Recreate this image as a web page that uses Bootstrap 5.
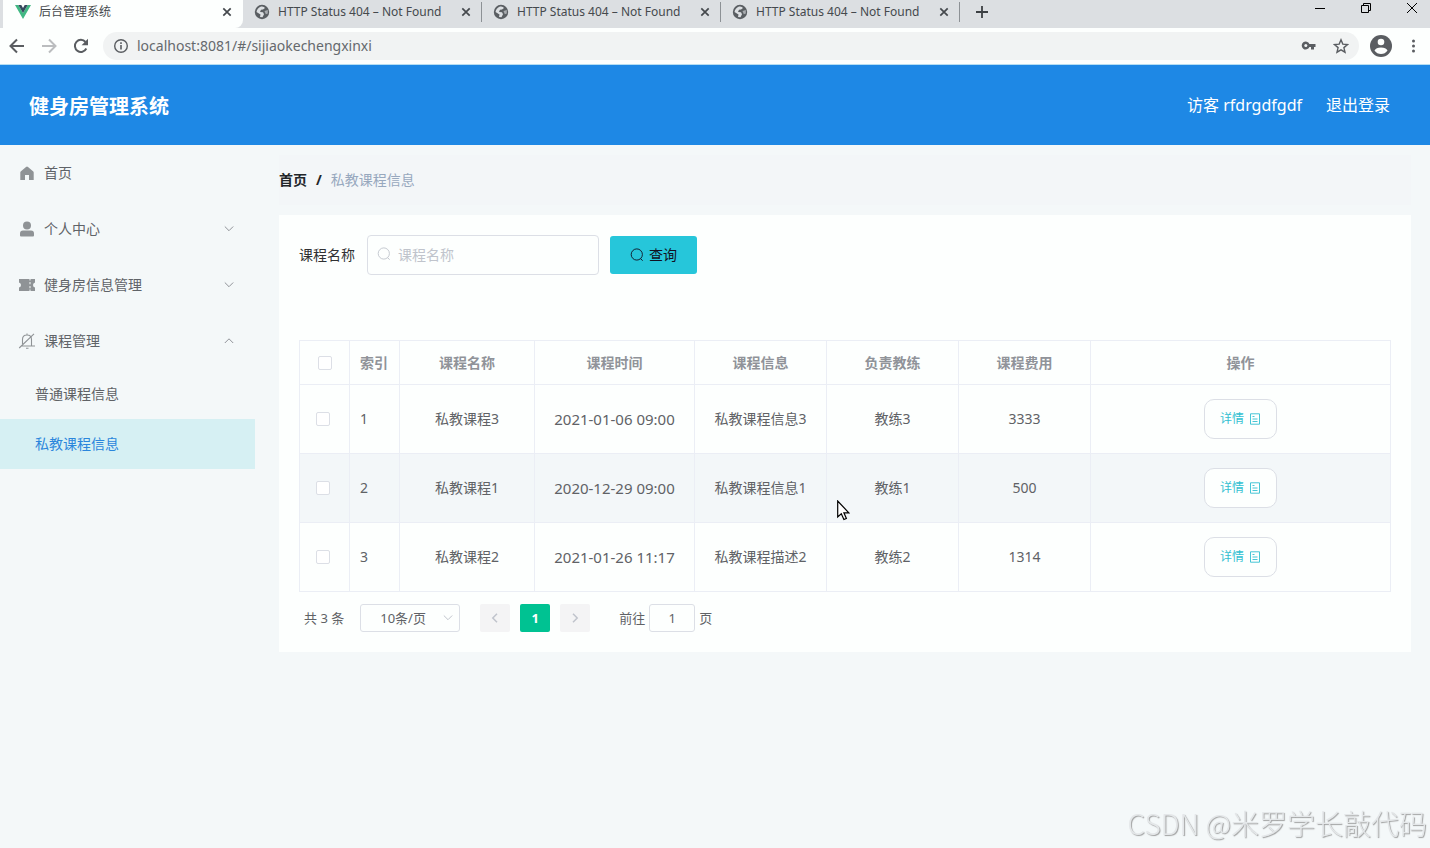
<!DOCTYPE html>
<html lang="zh-CN">
<head>
<meta charset="utf-8">
<meta name="viewport" content="width=device-width, initial-scale=1">
<title>后台管理系统</title>
<link href="https://cdn.jsdelivr.net/npm/bootstrap@5.3.0/dist/css/bootstrap.min.css" rel="stylesheet">
<style>
:root { --page: #f4f8f9; --panel: #fdfffe; --line: #ebeef5; --ink: #606266; --cyan: #26c6da; }
body { font-family: "Noto Sans", "Noto Sans CJK SC", sans-serif; font-size: 14px; line-height: 20px; color: var(--ink); background: var(--page); overflow-x: hidden; }
a { color: inherit; text-decoration: none; }
svg { display: block; flex: none; }
.plain { border: 0; background: none; padding: 0; color: inherit; }

/* browser frame */
.tabstrip { background: #dcdfe2; height: 28px; color: #45494d; font-size: 12px; padding-left: 3px; }
.tab-item { width: 239px; height: 28px; padding: 0 9px 5px 11px; gap: 8px; }
.tab-item.current { background: var(--panel); width: 240px; padding-left: 12px; border-radius: 0 0 8px 0; }
.tab-item + .tab-item .tab-end { border-right: 1px solid #8d9195; }
.tab-end { height: 20px; width: 21px; padding-right: 10px; margin-right: -9px; }
.win-btns { gap: 36px; padding: 0 13px 12px 0; color: #000; }
.toolbar { background: var(--panel); height: 37px; padding: 0 6px 0 9px; border-bottom: 1px solid #b5def3; color: #5a5d61; }
.address { background: #f1f3f3; height: 28px; border-radius: 14px; padding: 0 10px; margin: 0 11px 0 14px; }
.address input { font-size: 14px; color: #65696d; outline: 0; }

/* application */
.topbar { background: #1e88e5; color: #fff; height: 80px; padding: 0 40px 0 29px; }
.brand { font-size: 20px; line-height: 28px; font-weight: 700; margin: 0; padding-top: 4px; }
.user-links { font-size: 16px; gap: 24px; }
.side { width: 255px; }
.side-item { height: 56px; padding: 0 21px 0 20px; gap: 10px; color: #5f6368; width: 100%; }
.side-item > svg:first-child { color: #8f9396; }
.side-item > svg:last-child { color: #909399; }
.side-sub { height: 50px; padding-left: 35px; }
.side-sub.current { background: #d6f0f3; color: #2b86dc; }
.content-area { padding: 10px 19px 24px 24px; }
.crumbs { height: 50px; background: #f3f6f8; gap: 9px; }
.crumbs span { color: #97a8be; }
.panel { background: var(--panel); margin-top: 10px; padding: 20px; }
.search-row { height: 40px; margin-bottom: 65px; color: #303133; }
.search-box { width: 232px; margin: 0 11px 0 12px; }
.search-box svg { position: absolute; left: 10px; top: 12px; color: #c0c4cc; }
.search-box input { height: 40px; font-size: 14px; line-height: 20px; padding: 0 12px 2px 30px; border: 1px solid #dcdfe6; border-radius: 4px; background: var(--panel); }
.search-box input::placeholder { color: #c0c4cc; }
.btn-find { --bs-btn-bg: var(--cyan); --bs-btn-color: #112; --bs-btn-hover-bg: #4dd0e1; height: 38px; width: 87px; gap: 5px; font-size: 14px; line-height: 20px; padding: 0 0 1px; border: 0; border-radius: 3px; }
.grid { table-layout: fixed; --bs-table-bg: var(--panel); --bs-table-color: var(--ink); --bs-table-border-color: var(--line); border-color: var(--line); margin: 0; color: var(--ink); text-align: center; }
.grid th { height: 44px; padding: 0 10px; color: #909399; font-weight: 700; vertical-align: middle; }
.grid td { height: 69px; padding: 0 10px; vertical-align: middle; }
.grid .hovered { --bs-table-bg: #f3f7f9; }
.grid .idx { text-align: left; }
.grid .num { font-size: 15px; }
.grid .form-check-input { width: 14px; height: 14px; margin: 0; border: 1px solid #dcdfe6; border-radius: 2px; display: block; background-color: #fff; }
.grid td:first-child { padding: 0 16px; }
.grid th:first-child { padding: 0 18px; }
.btn-detail { --bs-btn-color: #32bfd1; --bs-btn-bg: #fdfffe; --bs-btn-border-color: #dcdfe6; width: 73px; height: 40px; font-size: 12px; border-radius: 10px; padding: 0; gap: 5px; }
.pointer { position: absolute; left: 10px; top: 46px; }
.pager { font-size: 13px; padding: 12px 5px 0; }
.pager .page-btn { width: 30px; height: 28px; border: 0; border-radius: 2px; background: #f4f4f5; color: #c0c4cc; font-size: 13px; font-weight: 700; padding: 0; }
.pager .page-btn.current { background: #00c292; color: #fff; margin: 0 10px; }
.pager label { margin-left: 29px; }
.size-box { width: 100px; margin: 0 20px 0 16px; }
.size-box select { height: 28px; font-size: 13px; line-height: 20px; padding: 0 25px 0 19px; background: var(--panel); color: var(--ink); border: 1px solid #dcdfe6; border-radius: 3px; }
.size-box svg { position: absolute; right: 7px; top: 9px; color: #c0c4cc; }
.jump { width: 46px; height: 28px; font-size: 13px; padding: 0; margin: 0 4px; border: 1px solid #dcdfe6; border-radius: 3px; text-align: center; color: var(--ink); background: var(--panel); }
.watermark { position: fixed; right: 3px; bottom: 5px; font-family: "Noto Sans CJK SC", sans-serif; font-weight: 300; font-size: 28px; line-height: 40px; color: #e4e7e9; text-shadow: 1px 1px 1px #888c; pointer-events: none; white-space: nowrap; }
</style>
</head>
<body class="d-flex flex-column min-vh-100">
<svg class="d-none">
  <symbol id="globe" viewBox="0 0 16 16"><circle cx="8" cy="8" r="7.2" fill="#5a5e62"/><path d="M7 2.500Q10 2 11 4l-2 1.500-2 .3L6 8l3 .3 1 2-1.500 3L6 13l.5-2.500L2.500 8Q3 4 7 2.500z" fill="#dcdfe2"/><path d="M10.500 7l3.300-1v3.500l-2 .7z" fill="#dcdfe2" opacity=".6"/></symbol>
  <symbol id="cross" viewBox="0 0 10 10"><path d="M1.300 1.300l7.400 7.400M8.700 1.300L1.300 8.700" stroke="currentColor" stroke-width="1.700"/></symbol>
  <symbol id="down" viewBox="0 0 10 10"><path d="M.8 2.500L5 6.700 9.200 2.500" fill="none" stroke="currentColor"/></symbol>
  <symbol id="lens" viewBox="0 0 14 14"><circle cx="6.800" cy="6.500" r="5.600" fill="none" stroke="currentColor" stroke-width=".9"/><path d="M10.600 10.700l2 2" stroke="currentColor"/></symbol>
  <symbol id="doc" viewBox="0 0 12 12"><path d="M1.500.8h9v10.400h-9zM3.500 3.500h2M3.500 6h5M3.500 8.500h5" fill="none" stroke="currentColor" stroke-width=".9"/></symbol>
</svg>

<header>
  <div class="tabstrip d-flex">
    <div class="tab-item current d-flex align-items-center">
      <svg width="16" height="16" viewBox="0 0 16 16"><path d="M0 1h3.300L8 9l4.700-8H16L8 15z" fill="#41b883"/><path d="M3.300 1h3L8 4l1.700-3h3L8 9z" fill="#35495e"/></svg>
      <span class="flex-grow-1">后台管理系统</span>
      <button class="plain tab-end d-flex align-items-center" aria-label="关闭"><svg width="10" height="10"><use href="#cross"/></svg></button>
    </div>
    <div class="tab-item d-flex align-items-center"><svg width="16" height="16"><use href="#globe"/></svg><span class="flex-grow-1 text-nowrap">HTTP Status 404 – Not Found</span><button class="plain tab-end d-flex align-items-center" aria-label="关闭"><svg width="10" height="10"><use href="#cross"/></svg></button></div>
    <div class="tab-item d-flex align-items-center"><svg width="16" height="16"><use href="#globe"/></svg><span class="flex-grow-1 text-nowrap">HTTP Status 404 – Not Found</span><button class="plain tab-end d-flex align-items-center" aria-label="关闭"><svg width="10" height="10"><use href="#cross"/></svg></button></div>
    <div class="tab-item d-flex align-items-center"><svg width="16" height="16"><use href="#globe"/></svg><span class="flex-grow-1 text-nowrap">HTTP Status 404 – Not Found</span><button class="plain tab-end d-flex align-items-center" aria-label="关闭"><svg width="10" height="10"><use href="#cross"/></svg></button></div>
    <button class="plain ms-3 pb-1" aria-label="新标签页"><svg width="12" height="12" viewBox="0 0 12 12"><path d="M6 0v12M0 6h12" stroke="#3c4043" stroke-width="1.800"/></svg></button>
    <div class="win-btns d-flex align-items-center ms-auto">
      <button class="plain" aria-label="最小化"><svg width="10" height="10"><path d="M0 5.500h10" stroke="currentColor"/></svg></button>
      <button class="plain" aria-label="还原"><svg width="10" height="10"><path d="M.5 2.500h7v7h-7zM2.500 2.500v-2h7v7h-2" fill="none" stroke="currentColor"/></svg></button>
      <button class="plain" aria-label="关闭窗口"><svg width="10" height="10"><path d="M0 0l10 10M10 0L0 10" stroke="currentColor"/></svg></button>
    </div>
  </div>
  <div class="toolbar d-flex align-items-center">
    <button class="plain" aria-label="后退"><svg width="16" height="16" viewBox="0 0 16 16"><path d="M15 8H2M8 1.500L1.500 8 8 14.500" fill="none" stroke="currentColor" stroke-width="2"/></svg></button>
    <button class="plain ms-3" aria-label="前进"><svg width="16" height="16" viewBox="0 0 16 16"><path d="M1 8h13M8 1.500L14.500 8 8 14.500" fill="none" stroke="#bbbdbf" stroke-width="2"/></svg></button>
    <button class="plain ms-3" aria-label="刷新"><svg width="16" height="16" viewBox="0 0 16 16"><path d="M13.300 10.500A6 6 0 1 1 12.500 4" fill="none" stroke="currentColor" stroke-width="2"/><path d="M15 .8v6.400H8.600z" fill="currentColor"/></svg></button>
    <div class="address d-flex align-items-center flex-grow-1">
      <svg width="16" height="16" viewBox="0 0 16 16"><circle cx="8" cy="8" r="6.300" fill="none" stroke="currentColor" stroke-width="1.400"/><path d="M8 7v4.500M8 4.300v1.600" stroke="currentColor" stroke-width="1.600"/></svg>
      <input class="plain flex-grow-1 ms-2" type="text" value="localhost:8081/#/sijiaokechengxinxi" aria-label="地址">
      <svg width="16" height="16" viewBox="0 0 16 16"><path d="M8.400 6A4 4 0 1 0 8.400 9H10v2.400h3V9h1.500V6z" fill="currentColor"/><circle cx="4.800" cy="7.500" r="1.500" fill="#f1f3f3"/></svg>
      <svg class="ms-3" width="16" height="16" viewBox="0 0 16 16"><path d="M8 1.800l1.800 4.300 4.700.4-3.600 3.100 1.100 4.600L8 11.800l-4 2.400 1.100-4.600L1.500 6.500l4.700-.4z" fill="none" stroke="currentColor" stroke-width="1.400"/></svg>
    </div>
    <button class="plain" aria-label="用户"><svg width="22" height="22" viewBox="0 0 22 22"><circle cx="11" cy="11" r="11" fill="currentColor"/><circle cx="11" cy="7" r="3.300" fill="#fdfffe"/><path d="M4.500 15.500Q6 12.500 11 12.500t6.500 3Q15 19 11 19t-6.500-3.500z" fill="#fdfffe"/></svg></button>
    <button class="plain ms-3" aria-label="菜单"><svg width="16" height="16" viewBox="0 0 16 16" fill="currentColor"><circle cx="5.500" cy="3" r="1.500"/><circle cx="5.500" cy="8" r="1.500"/><circle cx="5.500" cy="13" r="1.500"/></svg></button>
  </div>
  <div class="topbar d-flex align-items-center justify-content-between">
    <h1 class="brand">健身房管理系统</h1>
    <div class="user-links d-flex"><span>访客 rfdrgdfgdf</span><a href="#">退出登录</a></div>
  </div>
</header>

<div class="d-flex flex-grow-1">
  <nav class="side flex-shrink-0">
    <a href="#" class="side-item d-flex align-items-center"><svg width="14" height="14" viewBox="0 0 14 14"><path d="M7 .5q.5 0 1 .5l5.300 4.500q.4.400.4 1V14H9V9H5v5H.3V6.500q0-.6.4-1L6 1q.5-.5 1-.5z" fill="currentColor"/></svg><span>首页</span></a>
    <button class="plain side-item d-flex align-items-center"><svg width="14" height="16" viewBox="0 0 14 16" fill="currentColor"><circle cx="7" cy="4.500" r="4"/><path d="M0 14.500v-2Q0 9.500 3 9.500h8q3 0 3 3v2q0 1-1 1H1q-1 0-1-1z"/></svg>个人中心<svg class="ms-auto" width="10" height="10"><use href="#down"/></svg></button>
    <button class="plain side-item d-flex align-items-center"><svg width="14" height="12" viewBox="0 0 14 12" overflow="visible"><path d="M-1 0H9.500v1.500h1V0H15v3.500q-2 .5-2 2.500t2 2.500V12h-4.500v-1.500h-1V12H-1V8.500q2-.5 2-2.500t-2-2.500zM9.500 3v2.300h1V3zm0 4v2.300h1V7z" fill="currentColor" fill-rule="evenodd"/></svg>健身房信息管理<svg class="ms-auto" width="10" height="10"><use href="#down"/></svg></button>
    <button class="plain side-item d-flex align-items-center"><svg width="14" height="16" viewBox="0 0 14 16" overflow="visible"><path d="M2.500 11V6.500Q2.500 2 7 2t4.500 4.500V13H1.500M7 .5V2M6 15.300h2.500M14 .8L-.8 15M11.500 13H15" fill="none" stroke="currentColor" stroke-width="1.100"/></svg>课程管理<svg class="ms-auto" width="10" height="10" viewBox="0 0 10 10"><path d="M.8 7L5 2.800 9.200 7" fill="none" stroke="currentColor"/></svg></button>
    <a href="#" class="side-sub d-flex align-items-center">普通课程信息</a>
    <a href="#" class="side-sub current d-flex align-items-center">私教课程信息</a>
  </nav>

  <main class="content-area flex-grow-1">
    <div class="crumbs d-flex align-items-center">
      <a href="#" class="fw-bold text-dark">首页</a><b class="text-dark">/</b><span>私教课程信息</span>
    </div>
    <section class="panel">
      <form class="search-row d-flex align-items-center">
        <label for="course">课程名称</label>
        <div class="search-box position-relative"><input id="course" class="form-control" type="text" placeholder="课程名称"><svg width="14" height="14"><use href="#lens"/></svg></div>
        <button type="button" class="btn btn-find d-flex align-items-center justify-content-center"><svg width="14" height="14"><use href="#lens"/></svg>查询</button>
      </form>
      <table class="table table-bordered grid">
        <colgroup><col width="50"><col width="50"><col width="135"><col width="160"><col width="132"><col width="132"><col width="132"><col></colgroup>
        <thead><tr><th><input type="checkbox" class="form-check-input" aria-label="全选"></th><th class="idx">索引</th><th>课程名称</th><th>课程时间</th><th>课程信息</th><th>负责教练</th><th>课程费用</th><th>操作</th></tr></thead>
        <tbody>
          <tr><td><input type="checkbox" class="form-check-input" aria-label="选择 1"></td><td class="idx">1</td><td>私教课程3</td><td class="num">2021-01-06 09:00</td><td>私教课程信息3</td><td>教练3</td><td>3333</td><td><button class="btn btn-detail d-inline-flex align-items-center justify-content-center">详情<svg width="12" height="12"><use href="#doc"/></svg></button></td></tr>
          <tr class="hovered"><td><input type="checkbox" class="form-check-input" aria-label="选择 2"></td><td class="idx">2</td><td>私教课程1</td><td class="num">2020-12-29 09:00</td><td>私教课程信息1</td><td class="position-relative">教练1<svg class="pointer" width="13" height="21" viewBox="0 0 13 21"><path d="M.7 1v16l3.600-3.300 2.600 5.800 2.500-1-2.500-5.700h4.900z" fill="#fff" stroke="#000" stroke-width="1.200"/></svg></td><td>500</td><td><button class="btn btn-detail d-inline-flex align-items-center justify-content-center">详情<svg width="12" height="12"><use href="#doc"/></svg></button></td></tr>
          <tr><td><input type="checkbox" class="form-check-input" aria-label="选择 3"></td><td class="idx">3</td><td>私教课程2</td><td class="num">2021-01-26 11:17</td><td>私教课程描述2</td><td>教练2</td><td>1314</td><td><button class="btn btn-detail d-inline-flex align-items-center justify-content-center">详情<svg width="12" height="12"><use href="#doc"/></svg></button></td></tr>
        </tbody>
      </table>
      <div class="pager d-flex align-items-center">
        <span>共 3 条</span>
        <div class="size-box position-relative"><select class="form-select" aria-label="每页条数"><option>10条/页</option><option>20条/页</option></select><svg width="10" height="10"><use href="#down"/></svg></div>
        <button class="page-btn d-flex align-items-center justify-content-center" aria-label="上一页"><svg width="10" height="10" viewBox="0 0 10 10"><path d="M7 .8L2.800 5 7 9.200" fill="none" stroke="currentColor" stroke-width="1.500"/></svg></button>
        <button class="page-btn current">1</button>
        <button class="page-btn d-flex align-items-center justify-content-center" aria-label="下一页"><svg width="10" height="10" viewBox="0 0 10 10"><path d="M3 .8L7.200 5 3 9.200" fill="none" stroke="currentColor" stroke-width="1.500"/></svg></button>
        <label for="jump">前往</label><input id="jump" class="jump" type="text" value="1"><span>页</span>
      </div>
    </section>
  </main>
</div>
<div class="watermark">CSDN @米罗学长敲代码</div>
<script src="https://cdn.jsdelivr.net/npm/bootstrap@5.3.0/dist/js/bootstrap.bundle.min.js"></script>
</body>
</html>
